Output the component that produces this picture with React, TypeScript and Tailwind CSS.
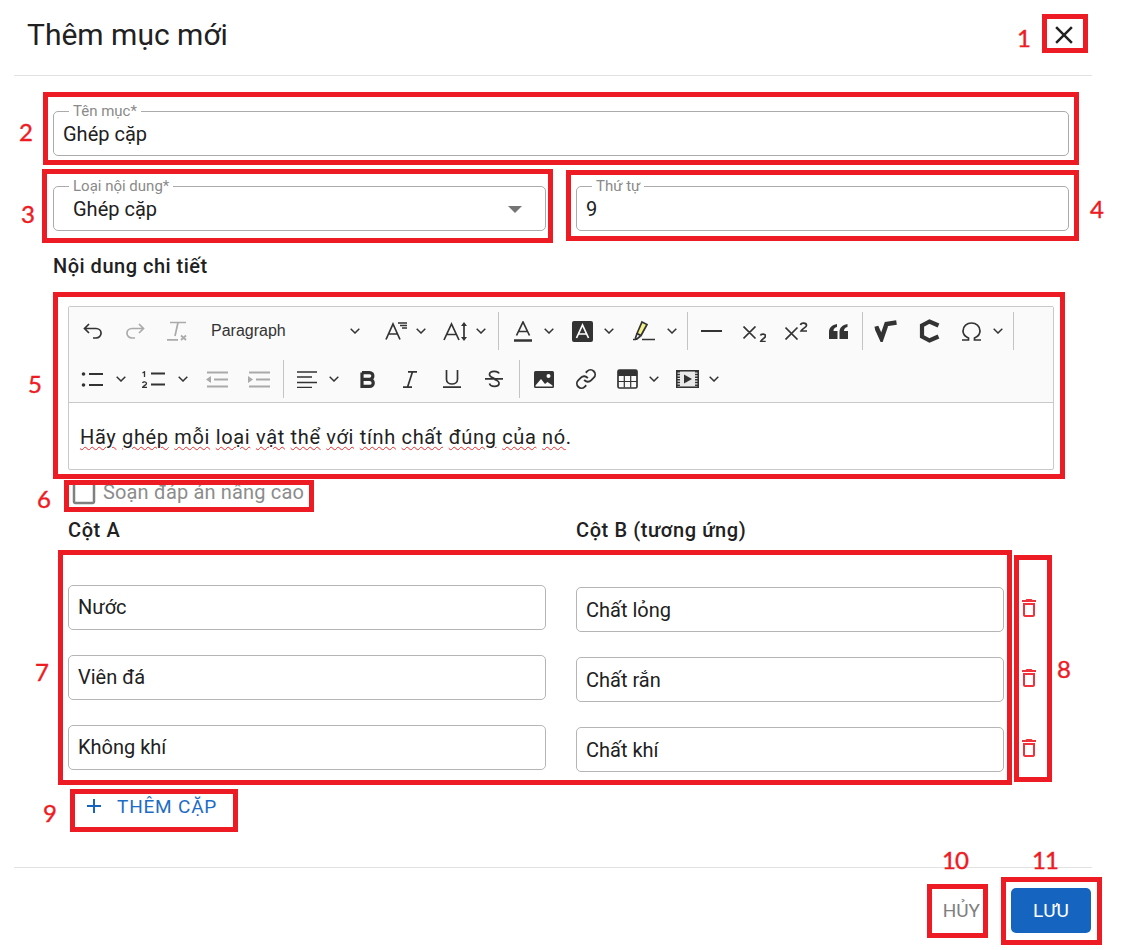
import React from 'react';

const INK = '#333333';
const MUTED = '#aaaaaa';

function Sep() {
  return <div className="w-px h-[38px] bg-[#c4c4c4] shrink-0" />;
}

function Chev({ className = '' }: { className?: string }) {
  return (
    <svg width="10" height="6" viewBox="0 0 10 6" className={`shrink-0 ${className}`} fill="none" stroke={INK} strokeWidth="1.5">
      <path d="M.7.8 5 5 9.3.8" />
    </svg>
  );
}

function Ico({ w, h, className = '', children }: { w: number; h: number; className?: string; children: React.ReactNode }) {
  return (
    <svg width={w} height={h} viewBox={`0 0 ${w} ${h}`} fill="none" stroke={INK} strokeWidth="1.7" className={`shrink-0 ${className}`}>
      {children}
    </svg>
  );
}

function ToolbarRowOne() {
  return (
    <div className="flex items-center h-[48px]">
      <Ico w={20} h={16} className="ml-[14px]"><path d="M6 1 1.500 5.500 6 10M2 5.500h11a5 4.700 0 0 1 0 9.500h-3" /></Ico>
      <Ico w={21} h={16} className="ml-[21px]"><path stroke={MUTED} d="M15 1l4.500 4.500L15 10M19 5.500H8a5 4.700 0 0 0 0 9.500h3" /></Ico>
      <Ico w={21} h={20} className="ml-[22px]">
        <path stroke={MUTED} d="M3 1.500h16M11 1.500 8 15M0 18.800h11M14 14.500l5 4.500M19 14.500l-5 4.500" />
      </Ico>
      <span className="ml-[23px] w-[139px] text-[16px] leading-none text-[#333] font-[family-name:'Liberation_Sans',Arial,sans-serif]">Paragraph</span>
      <Chev />
      <Ico w={23} h={18} className="ml-[25px]"><path d="M1 17.500 8 2l7 15.500M3.500 12h9.500M13 1h9M15 3.500h7M17 6h5" /></Ico>
      <Chev className="ml-[8px]" />
      <Ico w={26} h={19} className="ml-[17px]"><path d="M1 18 8.500 2 16 18M3.500 12.500h10M21 3v13" /><path fill={INK} stroke="none" d="M21 0l3 4h-6zM21 19l3-4h-6z" /></Ico>
      <Chev className="ml-[7px]" />
      <div className="ml-[12px]"><Sep /></div>
      <Ico w={18} h={21} className="ml-[15px]"><path d="M2.500 14.500 9 1l6.500 13.500M4.500 10.500h9" /><path strokeWidth="2.500" d="M0 19.500h18" /></Ico>
      <Chev className="ml-[12px]" />
      <Ico w={21} h={21} className="ml-[18px]">
        <rect width="21" height="21" rx="2" fill={INK} stroke="none" />
        <path stroke="#fff" d="M4.500 17 10.500 4l6 13M6.500 13h8" />
      </Ico>
      <Chev className="ml-[11px]" />
      <Ico w={22} h={22} className="ml-[19px]">
        <path fill="#f4f08a" d="M9 2l5 2.500-6 11L4 13.500z" />
        <path d="M4 13.500 2.500 18l1.500 1 3.500-3M9 19.500h13M0 19.500h3" />
      </Ico>
      <Chev className="ml-[12px]" />
      <div className="ml-[10px]"><Sep /></div>
      <Ico w={21} h={4} className="ml-[13px]"><path strokeWidth="2" d="M0 2h21" /></Ico>
      <Ico w={23} h={16} className="ml-[21px] translate-y-[3px]"><path d="M.5 .5l12 12M12.500 .5l-12 12M17.500 9.500c.5-2 5-2 5 .5 0 2-4 3-4.800 5.500h5" /></Ico>
      <Ico w={23} h={18} className="ml-[19px]"><path d="M.5 5.500l12 12M12.500 5.500l-12 12M15.500 3c.5-2.500 6-2.500 6 .5 0 2-4.500 3-5.500 5.500h6" /></Ico>
      <Ico w={19} h={15} className="ml-[21px]">
        <path fill={INK} stroke="none" d="M0 15V8C0 3.500 3 1 8 0v3C5.500 3.500 4.500 5 4.500 7H8.500v8zM10.500 15V8c0-4.500 3-7 8-8v3c-2.500.5-3.500 2-3.500 4h4v8z" />
      </Ico>
      <div className="ml-[14px]"><Sep /></div>
      <Ico w={25} h={22} className="ml-[11px]"><path strokeWidth="4.500" d="M1 9l2-.5 4.500 10 5-14.500 10-1.500" /></Ico>
      <Ico w={21} h={24} className="ml-[20px]"><path strokeWidth="4.200" d="M19.500 6.500 10.500 2.500 3 6.500v11l7.500 4 9-4" /></Ico>
      <Ico w={21} h={19} className="ml-[21px]"><path strokeWidth="1.700" d="M1 18h6.500v-2C4 14.500 2 12 2 9c0-5 4-8 8.500-8S19 4 19 9c0 3-2 5.500-5.500 7v2H20" /></Ico>
      <Chev className="ml-[11px]" />
      <div className="ml-[10px]"><Sep /></div>
    </div>
  );
}

function ToolbarRowTwo() {
  return (
    <div className="flex items-center h-[48px]">
      <Ico w={22} h={15} className="ml-[12px]">
        <circle cx="2.500" cy="2" r="1.800" fill={INK} stroke="none" />
        <circle cx="2.500" cy="13" r="1.800" fill={INK} stroke="none" />
        <path strokeWidth="1.800" d="M8 2h14M8 13h14" />
      </Ico>
      <Chev className="ml-[13px]" />
      <Ico w={23} h={17} className="ml-[16px]">
        <path strokeWidth="1.300" d="M.5 2 2.500 .8V6" />
        <path strokeWidth="1.300" d="M.5 12c.5-1.500 4-1.500 4 .5 0 1.500-3 2-4 4h4.500" />
        <path strokeWidth="1.800" d="M9 2.500h14M9 13.500h14" />
      </Ico>
      <Chev className="ml-[13px]" />
      <Ico w={22} h={17} className="ml-[18px]">
        <path stroke="#aaa" strokeWidth="1.800" d="M1 1.500h21M8 8.500h14M1 15.500h21" />
        <path fill="#aaa" stroke="none" d="M0 8.500l5-3.500v7z" />
      </Ico>
      <Ico w={22} h={17} className="ml-[20px]">
        <path stroke="#aaa" strokeWidth="1.800" d="M1 1.500h21M8 8.500h14M1 15.500h21" />
        <path fill="#aaa" stroke="none" d="M5 8.500 0 5v7z" />
      </Ico>
      <div className="ml-[13px]"><Sep /></div>
      <Ico w={20} h={17} className="ml-[13px]"><path strokeWidth="1.700" d="M0 1h20M0 6h15M0 11.500h20M0 16.500h15" /></Ico>
      <Chev className="ml-[12px]" />
      <Ico w={16} h={17} className="ml-[21px]"><path strokeWidth="3.200" d="M2 1.600v13.800h7.500c5 0 5-7 0-7H2m7.500 0c4.500 0 4.500-6.800 0-6.800H2" /></Ico>
      <Ico w={14} h={17} className="ml-[27px]"><path d="M5 .8h9M0 16.200h9M9.500 .8 4.500 16.200" /></Ico>
      <Ico w={18} h={18} className="ml-[26px]"><path d="M3.500 0v9.500c0 6 11 6 11 0V0M0 17.200h18" /></Ico>
      <Ico w={18} h={18} className="ml-[24px]"><path d="M14 3.500C13 .5 5 .5 4.500 4c-.3 2 2 3.500 5 4.500M0 8.800h18M9.500 9.500c3 1 5 2 4.500 4.500-.6 3.200-8.500 3.300-9.500-.5" /></Ico>
      <div className="ml-[16px]"><Sep /></div>
      <Ico w={20} h={17} className="ml-[14px]">
        <rect width="20" height="17" rx="1.500" fill={INK} stroke="none" />
        <path fill="#fff" stroke="none" d="M1.500 14.500 7 8l4 5 2.500-2 5 3.500v1H1.500z" />
        <circle cx="14.500" cy="5" r="2" fill="#fff" stroke="none" />
      </Ico>
      <svg width="22" height="22" viewBox="0 0 24 24" fill="none" stroke={INK} strokeWidth="2" className="ml-[21px] shrink-0">
        <path d="M10 13a5 5 0 0 0 7.540.54l3-3a5 5 0 0 0-7.070-7.070l-1.720 1.710" />
        <path d="M14 11a5 5 0 0 0-7.540-.54l-3 3a5 5 0 0 0 7.070 7.070l1.710-1.710" />
      </svg>
      <Ico w={21} h={20} className="ml-[20px]">
        <rect x="1" y="1" width="19" height="18" rx="1.500" />
        <path strokeWidth="1.200" d="M1 6.500h19M1 12.500h19M7.300 6.500v12M13.700 6.500v12" />
        <path fill={INK} stroke="none" d="M1 1h19v5H1z" />
      </Ico>
      <Chev className="ml-[11px]" />
      <Ico w={23} h={18} className="ml-[17px]">
        <rect x=".7" y=".7" width="21.600" height="16.600" fill="#e9e9e9" />
        <path strokeWidth="3.500" strokeDasharray="1.500 1.200" d="M2.200 1v16M20.800 1v16" />
        <path fill={INK} stroke="none" d="M8 4.500 16 9l-8 4.500z" />
      </Ico>
      <Chev className="ml-[10px]" />
    </div>
  );
}

function Field({ label, className = '', children }: { label: string; className?: string; children: React.ReactNode }) {
  return (
    <div className={`relative h-[45px] border border-[#ababab] rounded-[5px] flex items-center px-[9px] pt-[1px] text-[20px] text-[#212121] ${className}`}>
      <span className="absolute left-[15px] top-[-9px] bg-white px-[4px] text-[15px] leading-[16px] text-[#8a8a8a]">{label}</span>
      {children}
    </div>
  );
}

function PlainInput({ value, className = '' }: { value: string; className?: string }) {
  return (
    <div className={`h-[45px] border border-[#b5b5b5] rounded-[5px] flex items-center px-[9px] text-[20px] text-[#212121] ${className}`}>
      {value}
    </div>
  );
}

function Trash() {
  return (
    <svg width="24" height="24" viewBox="0 0 24 24" fill="#f0323c" className="shrink-0">
      <path d="M6 19c0 1.100.9 2 2 2h8c1.100 0 2-.9 2-2V7H6v12zM8 9h8v10H8V9zm7.500-5l-1-1h-5l-1 1H5v2h14V4z" />
    </svg>
  );
}

function Box({ className }: { className: string }) {
  return <div className={`absolute border-[5px] border-[#ed1c24] ${className}`} />;
}

function Num({ children, className }: { children: React.ReactNode; className: string }) {
  return (
    <span className={`absolute text-[24px] leading-[30px] [-webkit-text-stroke:0.4px_#ed1c24] text-[#ed1c24] font-[family-name:Lato,sans-serif] ${className}`}>
      {children}
    </span>
  );
}

const PAIRS = [
  ['Nước', 'Chất lỏng'],
  ['Viên đá', 'Chất rắn'],
  ['Không khí', 'Chất khí'],
];

const SENTENCE = ['Hãy', 'ghép', 'mỗi', 'loại', 'vật', 'thể', 'với', 'tính', 'chất', 'đúng', 'của', 'nó'];

export default function App() {
  return (
    <div className="relative w-[1126px] h-[950px] overflow-hidden bg-white font-[family-name:Roboto,sans-serif]">
      {/* header */}
      <header className="ml-[14px] w-[1078px] h-[76px] border-b border-[#e2e2e2] flex items-center justify-between pl-[13px] pr-[13px] pb-[5px]">
        <h1 className="text-[30px] leading-none font-normal text-[#212121]">Thêm mục mới</h1>
        <svg width="30" height="30" viewBox="0 0 24 24" fill="#212121">
          <path d="M19 6.410 17.590 5 12 10.590 6.410 5 5 6.410 10.590 12 5 17.590 6.410 19 12 13.410 17.590 19 19 17.590 13.410 12z" />
        </svg>
      </header>

      <main className="ml-[53px] w-[1016px]">
        <Field label="Tên mục*" className="mt-[35px]">Ghép cặp</Field>

        <div className="flex gap-[30px] mt-[30px]">
          <Field label="Loại nội dung*" className="w-[493px] pl-[19px] pr-[23px] justify-between text-[#444]">
            Ghép cặp
            <svg width="14" height="7" viewBox="0 0 14 7" fill="#757575"><path d="M0 0h14L7 7z" /></svg>
          </Field>
          <Field label="Thứ tự" className="w-[493px]">9</Field>
        </div>

        <div className="mt-[23px] h-[24px] leading-[24px] text-[20px] font-medium tracking-[0.5px] text-[#212121]">Nội dung chi tiết</div>

        {/* editor */}
        <section className="mt-[28px] ml-[15px] w-[986px] h-[164px] border border-[#c9c9c9] rounded-[2px] flex flex-col">
          <div className="h-[96px] bg-[#fafafa] border-b border-[#c9c9c9]">
            <ToolbarRowOne />
            <ToolbarRowTwo />
          </div>
          <div className="flex-1 flex items-center px-[11px] pt-[1px] text-[20px] tracking-[0.65px] text-[#212121]">
            <p>
              {SENTENCE.map((w, i) => (
                <React.Fragment key={w}>
                  {i > 0 && ' '}
                  <span className="underline decoration-wavy decoration-[#ee2b2b] decoration-1 underline-offset-[2px]">{w}</span>
                </React.Fragment>
              ))}
              .
            </p>
          </div>
        </section>

        {/* advanced answer */}
        <div className="ml-[16px] mt-[8px] h-[30px] flex items-center gap-[4px] text-[20px] tracking-[0.15px] text-[#8c8c8c]">
          <svg width="30" height="30" viewBox="0 0 24 24" fill="#808080">
            <path d="M19 5v14H5V5h14m0-2H5c-1.100 0-2 .9-2 2v14c0 1.100.9 2 2 2h14c1.100 0 2-.9 2-2V5c0-1.100-.9-2-2-2z" />
          </svg>
          <span className="mb-[2px]">Soạn đáp án nâng cao</span>
        </div>

        <div className="ml-[15px] mt-[10px] flex h-[24px] leading-[24px] text-[20px] font-medium tracking-[0.6px] text-[#212121]">
          <span className="w-[508px]">Cột A</span>
          <span>Cột B (tương ứng)</span>
        </div>

        {/* pairs */}
        <div className="ml-[15px] mt-[43px] flex flex-col gap-[23px]">
          {PAIRS.map(([a, b]) => (
            <div key={a} className="flex h-[47px]">
              <PlainInput value={a} className="w-[478px] pb-[2px]" />
              <PlainInput value={b} className="ml-[30px] mt-[2px] w-[428px]" />
              <div className="ml-[13px] mt-[11px]"><Trash /></div>
            </div>
          ))}
        </div>

        <div className="mt-[22px] ml-[29px] h-[24px] flex items-center gap-[11px] text-[19px] tracking-[0.8px] text-[#1e6cc4]">
          <svg width="24" height="24" viewBox="0 0 24 24" fill="#1565c0">
            <path d="M19 13h-6v6h-2v-6H5v-2h6V5h2v6h6v2z" />
          </svg>
          <span className="mt-[3px]">THÊM CẶP</span>
        </div>
      </main>

      {/* footer */}
      <footer className="ml-[14px] mt-[49px] w-[1078px] border-t border-[#e2e2e2] flex items-center justify-end gap-[31px] pt-[20px] pr-px">
        <span className="pt-[2px] text-[19px] text-[#808080]">HỦY</span>
        <button className="w-[80px] h-[45px] pt-[2px] rounded-[5px] bg-[#1565c0] text-white text-[19px]">LƯU</button>
      </footer>

      {/* annotation marks drawn over the screenshot */}
      <Box className="left-[1042px] top-[14px] w-[46px] h-[39px]" />
      <Box className="left-[43px] top-[92px] w-[1036px] h-[73px]" />
      <Box className="left-[42px] top-[169px] w-[511px] h-[74px]" />
      <Box className="left-[566px] top-[170px] w-[513px] h-[71px]" />
      <Box className="left-[53px] top-[292px] w-[1012px] h-[187px]" />
      <Box className="left-[64px] top-[480px] w-[250px] h-[32px]" />
      <Box className="left-[58px] top-[550px] w-[954px] h-[235px]" />
      <Box className="left-[1014px] top-[555px] w-[38px] h-[227px]" />
      <Box className="left-[70px] top-[789px] w-[168px] h-[43px]" />
      <Box className="left-[927px] top-[884px] w-[61px] h-[54px]" />
      <Box className="left-[1001px] top-[877px] w-[101px] h-[68px]" />

      <Num className="left-[1017px] top-[23px]">1</Num>
      <Num className="left-[19px] top-[117px]">2</Num>
      <Num className="left-[21px] top-[199px]">3</Num>
      <Num className="left-[1090px] top-[194px]">4</Num>
      <Num className="left-[28px] top-[369px]">5</Num>
      <Num className="left-[37px] top-[484px]">6</Num>
      <Num className="left-[35px] top-[657px]">7</Num>
      <Num className="left-[1057px] top-[654px]">8</Num>
      <Num className="left-[43px] top-[798px]">9</Num>
      <Num className="left-[942px] top-[845px] tracking-[-1px]">10</Num>
      <Num className="left-[1032px] top-[845px] tracking-[-1px]">11</Num>
    </div>
  );
}
